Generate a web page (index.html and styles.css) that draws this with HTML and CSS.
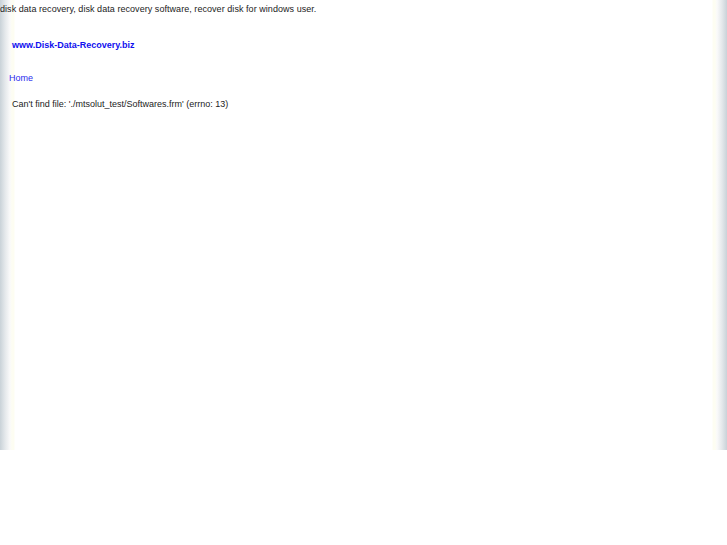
FILE: index.html
```html
<!DOCTYPE html>
<html>
<head>
<meta charset="utf-8">
<title>disk data recovery</title>
<link rel="stylesheet" href="styles.css">
</head>
<body>
<div class="page">
  <div class="tagline">disk data recovery, disk data recovery software, recover disk for windows user.</div>
  <div class="logo"><a href="#">www.Disk-Data-Recovery.biz</a></div>
  <div class="nav"><a href="#">Home</a></div>
  <div class="error">Can't find file: './mtsolut_test/Softwares.frm' (errno: 13)</div>
</div>
</body>
</html>
```
FILE: styles.css
```css
html, body {
  margin: 0;
  padding: 0;
  background: #fff;
}
body {
  font-family: "Liberation Sans", Arial, sans-serif;
  font-size: 9px;
  color: #222;
}
.page {
  height: 450px;
  background: linear-gradient(to right,
    #c9d2d8 0px, #e4e8eb 5px, #fafafa 10px, #fdfdf2 12px, #fdfdf2 14px, #ffffff 15px,
    #ffffff calc(100% - 15px), #fdfdf2 calc(100% - 14px), #fdfdf2 calc(100% - 12px), #fafafa calc(100% - 10px), #e4e8eb calc(100% - 5px), #c9d2d8 100%);
}
.tagline {
  padding-top: 3px;
  line-height: 12px;
  letter-spacing: 0.05px;
}
.logo {
  padding: 24px 0 0 12px;
  line-height: 12px;
  font-weight: bold;
}
.logo a {
  color: #1010ee;
  text-decoration: none;
}
.nav {
  padding: 21px 0 0 9px;
  line-height: 12px;
}
.nav a {
  color: #2a2aee;
  text-decoration: none;
}
.error {
  padding: 14px 0 0 12px;
  line-height: 12px;
}
```
